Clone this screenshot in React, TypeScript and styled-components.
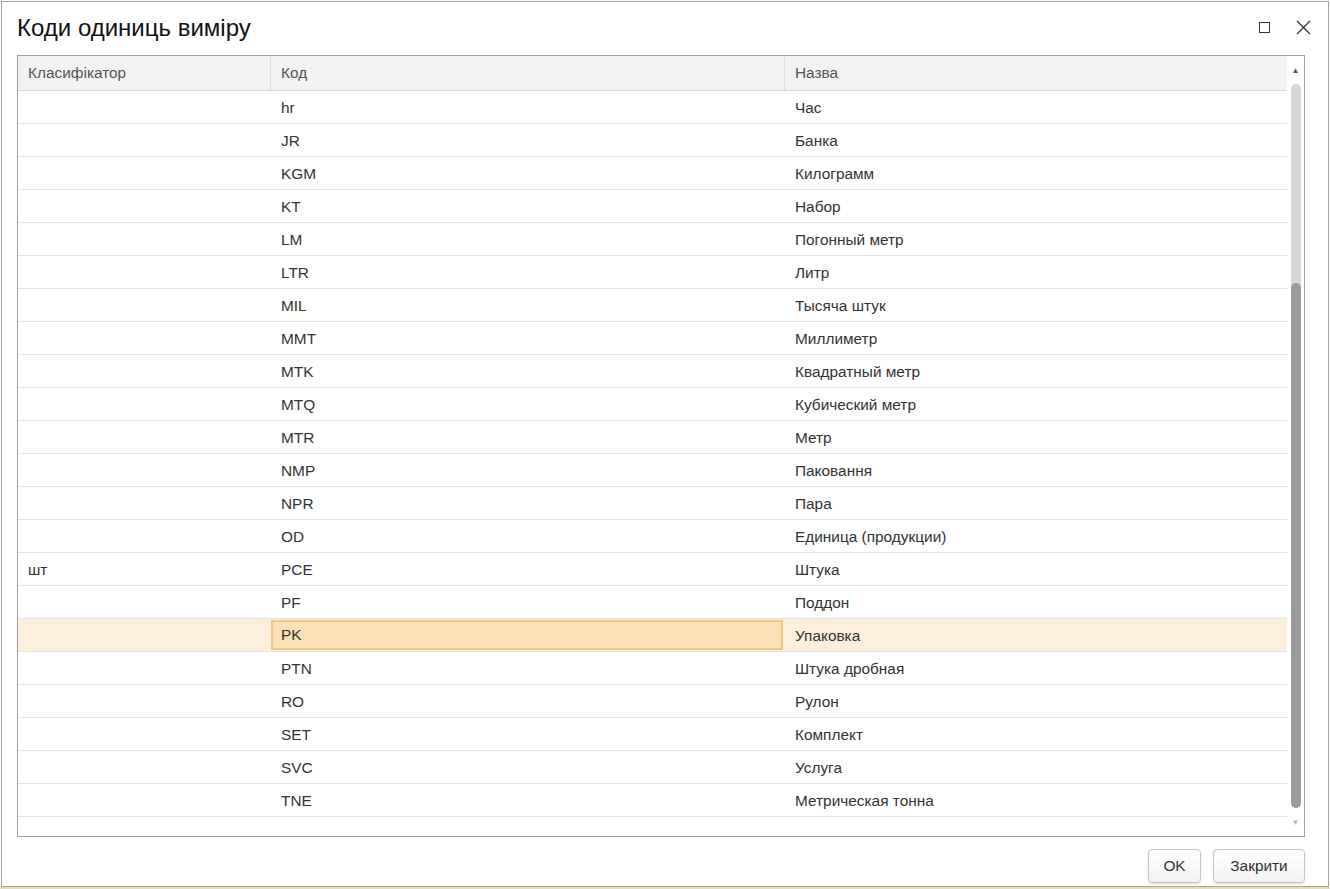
import React from 'react'
import styled, {createGlobalStyle} from 'styled-components'

type TRow = {
    klas: string
    code: string
    name: string
}

const rows: TRow[] = [
    {klas: "", code: "hr", name: "Час"},
    {klas: "", code: "JR", name: "Банка"},
    {klas: "", code: "KGM", name: "Килограмм"},
    {klas: "", code: "KT", name: "Набор"},
    {klas: "", code: "LM", name: "Погонный метр"},
    {klas: "", code: "LTR", name: "Литр"},
    {klas: "", code: "MIL", name: "Тысяча штук"},
    {klas: "", code: "MMT", name: "Миллиметр"},
    {klas: "", code: "MTK", name: "Квадратный метр"},
    {klas: "", code: "MTQ", name: "Кубический метр"},
    {klas: "", code: "MTR", name: "Метр"},
    {klas: "", code: "NMP", name: "Паковання"},
    {klas: "", code: "NPR", name: "Пара"},
    {klas: "", code: "OD", name: "Единица (продукции)"},
    {klas: "шт", code: "PCE", name: "Штука"},
    {klas: "", code: "PF", name: "Поддон"},
    {klas: "", code: "PK", name: "Упаковка"},
    {klas: "", code: "PTN", name: "Штука дробная"},
    {klas: "", code: "RO", name: "Рулон"},
    {klas: "", code: "SET", name: "Комплект"},
    {klas: "", code: "SVC", name: "Услуга"},
    {klas: "", code: "TNE", name: "Метрическая тонна"},
]

const GlobalStyle = createGlobalStyle`
    body {
        margin: 0;
        background: #fff;
        font-family: "Liberation Sans", Arial, sans-serif;
    }
`

const Page = styled.div`
    padding: 1px 1px 0 1px;
    height: 889px;
    box-sizing: border-box;
    display: flex;
    flex-direction: column;
`

const Window = styled.div`
    width: 1328px;
    height: 886px;
    box-sizing: border-box;
    border: 1px solid #a3a3a3;
    background: #fff;
    display: flex;
    flex-direction: column;
    padding: 0 23px 0 15px;
`

const BackStrip = styled.div`
    flex: 1;
    margin: 0 -1px;
    background: #f1d9b8;
`

const TitleBar = styled.div`
    height: 53px;
    display: flex;
    align-items: center;
    padding-bottom: 2px;
    margin-right: -10px;
    box-sizing: border-box;
`

const Title = styled.h1`
    margin: 0;
    flex: 1;
    font-size: 24px;
    font-weight: normal;
    color: #111;
    padding-top: 1px;
`

const WinButton = styled.button`
    border: none;
    background: none;
    padding: 0;
    width: 24px;
    height: 24px;
    display: flex;
    align-items: center;
    justify-content: center;
    margin-left: 14px;
    color: #333;
`

const TableBox = styled.div`
    height: 782px;
    border: 1px solid #a0a0a0;
    display: flex;
    box-sizing: border-box;
`

const Grid = styled.div`
    flex: 1;
    display: flex;
    flex-direction: column;
`

const Row = styled.div<{$selected?: boolean}>`
    display: grid;
    grid-template-columns: 253px 514px 1fr;
    height: 33px;
    box-sizing: border-box;
    border-bottom: 1px solid #e4e4e4;
    background: ${p => p.$selected ? "#fdefdb" : "#fff"};
`

const HeaderRow = styled(Row)`
    height: 35px;
    background: #f2f2f2;
    border-bottom: 1px solid #d9d9d9;
`

const HeadCell = styled.div`
    display: flex;
    align-items: center;
    padding-left: 10px;
    font-size: 15.4px;
    color: #555;
    border-right: 1px solid #dcdcdc;
    &:last-child {
        border-right: none;
    }
`

const Cell = styled.div<{$current?: boolean}>`
    display: flex;
    align-items: center;
    padding-left: ${p => p.$current ? "8px" : "10px"};
    padding-top: ${p => p.$current ? "0" : "1px"};
    font-size: 15.4px;
    color: #333;
    box-sizing: border-box;
    ${p => p.$current && `
        background: #fbdfb6;
        border: 2px solid #f3c67c;
        margin: 1px 2px 1px 0;
    `}
`

const Scroll = styled.div`
    width: 17px;
    display: flex;
    flex-direction: column;
    align-items: center;
`

const Arrow = styled.div<{$down?: boolean}>`
    height: 28px;
    display: flex;
    align-items: center;
    justify-content: center;
    color: ${p => p.$down ? "#b5b5b5" : "#555"};
    font-size: 8px;
`

const Track = styled.div`
    width: 10px;
    flex: 1;
    background: #d6d6d6;
    border-radius: 5px;
    display: flex;
    flex-direction: column;
    justify-content: flex-end;
`

const Thumb = styled.div`
    height: 525px;
    background: #9b9b9b;
    border-radius: 5px;
`

const Footer = styled.div`
    flex: 1;
    display: flex;
    justify-content: flex-end;
    align-items: flex-start;
    gap: 12px;
    padding-top: 12px;
`

const Button = styled.button<{$w: number}>`
    width: ${p => p.$w}px;
    height: 34px;
    border: 1px solid #c6c6c6;
    border-radius: 4px;
    background: linear-gradient(#ffffff, #f2f2f2);
    box-shadow: 0 1px 2px rgba(0, 0, 0, 0.15);
    font-family: "Liberation Sans", Arial, sans-serif;
    font-size: 15.4px;
    color: #333;
    padding: 0;
`

const App: React.FC = () => {
    return (
        <Page>
            <GlobalStyle/>
            <Window>
                <TitleBar>
                    <Title>Коди одиниць виміру</Title>
                    <WinButton>
                        <svg width="12" height="12" viewBox="0 0 12 12">
                            <rect x="0.5" y="0.5" width="10" height="10" fill="none" stroke="#333" strokeWidth="1"/>
                        </svg>
                    </WinButton>
                    <WinButton>
                        <svg width="15" height="15" viewBox="0 0 15 15">
                            <path d="M1 1 L14 14 M14 1 L1 14" stroke="#333" strokeWidth="1.3" fill="none"/>
                        </svg>
                    </WinButton>
                </TitleBar>
                <TableBox>
                    <Grid>
                        <HeaderRow>
                            <HeadCell>Класифікатор</HeadCell>
                            <HeadCell>Код</HeadCell>
                            <HeadCell>Назва</HeadCell>
                        </HeaderRow>
                        {rows.map(r => {
                            const sel = r.code === "PK"
                            return (
                                <Row key={r.code} $selected={sel}>
                                    <Cell>{r.klas}</Cell>
                                    <Cell $current={sel}>{r.code}</Cell>
                                    <Cell>{r.name}</Cell>
                                </Row>
                            )
                        })}
                    </Grid>
                    <Scroll>
                        <Arrow>▲</Arrow>
                        <Track>
                            <Thumb/>
                        </Track>
                        <Arrow $down>▼</Arrow>
                    </Scroll>
                </TableBox>
                <Footer>
                    <Button $w={53}>OK</Button>
                    <Button $w={92}>Закрити</Button>
                </Footer>
            </Window>
            <BackStrip/>
        </Page>
    )
}

export default App
